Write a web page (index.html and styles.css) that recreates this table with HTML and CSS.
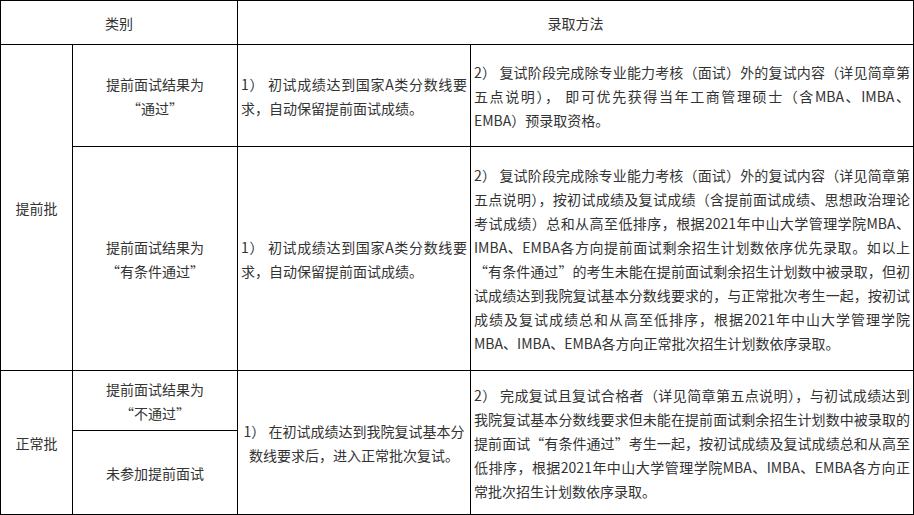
FILE: index.html
```html
<!DOCTYPE html>
<html lang="zh-CN">
<head>
<meta charset="utf-8">
<title>录取方法</title>
<link rel="stylesheet" href="styles.css">
</head>
<body>
<table class="admit">
  <colgroup>
    <col class="c1">
    <col class="c2">
    <col class="c3">
    <col class="c4">
  </colgroup>
  <tr class="r-head">
    <td colspan="2" class="center">类别</td>
    <td colspan="2" class="center">录取方法</td>
  </tr>
  <tr class="r-1">
    <td rowspan="2" class="center">提前批</td>
    <td class="center">提前面试结果为<br>“通过”</td>
    <td class="text">
      <span class="ln">1） 初试成绩达到国家A类分数线要</span>
      <span class="ln end">求，自动保留提前面试成绩。</span>
    </td>
    <td class="text">
      <span class="ln">2） 复试阶段完成除专业能力考核（面试）外的复试内容（详见简章第</span>
      <span class="ln">五点说明）， 即可优先获得当年工商管理硕士（含MBA、IMBA、</span>
      <span class="ln end">EMBA）预录取资格。</span>
    </td>
  </tr>
  <tr class="r-2">
    <td class="center">提前面试结果为<br>“有条件通过”</td>
    <td class="text">
      <span class="ln">1） 初试成绩达到国家A类分数线要</span>
      <span class="ln end">求，自动保留提前面试成绩。</span>
    </td>
    <td class="text">
      <span class="ln">2） 复试阶段完成除专业能力考核（面试）外的复试内容（详见简章第</span>
      <span class="ln">五点说明），按初试成绩及复试成绩（含提前面试成绩、思想政治理论</span>
      <span class="ln">考试成绩）总和从高至低排序，根据2021年中山大学管理学院MBA、</span>
      <span class="ln">IMBA、EMBA各方向提前面试剩余招生计划数依序优先录取。如以上</span>
      <span class="ln">“有条件通过”的考生未能在提前面试剩余招生计划数中被录取，但初</span>
      <span class="ln">试成绩达到我院复试基本分数线要求的，与正常批次考生一起，按初试</span>
      <span class="ln">成绩及复试成绩总和从高至低排序，根据2021年中山大学管理学院</span>
      <span class="ln end">MBA、IMBA、EMBA各方向正常批次招生计划数依序录取。</span>
    </td>
  </tr>
  <tr class="r-3a">
    <td rowspan="2" class="center">正常批</td>
    <td class="center">提前面试结果为<br>“不通过”</td>
    <td rowspan="2" class="center">1） 在初试成绩达到我院复试基本分<br>数线要求后，进入正常批次复试。</td>
    <td rowspan="2" class="text">
      <span class="ln">2） 完成复试且复试合格者（详见简章第五点说明），与初试成绩达到</span>
      <span class="ln">我院复试基本分数线要求但未能在提前面试剩余招生计划数中被录取的</span>
      <span class="ln">提前面试“有条件通过”考生一起，按初试成绩及复试成绩总和从高至</span>
      <span class="ln">低排序，根据2021年中山大学管理学院MBA、IMBA、EMBA各方向正</span>
      <span class="ln end">常批次招生计划数依序录取。</span>
    </td>
  </tr>
  <tr class="r-3b">
    <td class="center">未参加提前面试</td>
  </tr>
</table>
</body>
</html>
```

FILE: styles.css
```css
html, body {
  margin: 0;
  padding: 0;
  background: #fff;
}

body {
  font-family: "Noto Sans CJK SC", sans-serif;
  font-size: 14px;
  line-height: 24px;
  color: #333;
}

.admit {
  border-collapse: collapse;
  table-layout: fixed;
  width: 914px;
}

.c1 { width: 72px; }
.c2 { width: 165px; }
.c3 { width: 233px; }
.c4 { width: 443px; }

.admit td {
  border: 1px solid #000;
  padding: 0 3px;
  vertical-align: middle;
  overflow: hidden;
}

.r-head { height: 44px; }
.r-1 { height: 102px; }
.r-2 { height: 224px; }
.r-3a { height: 60px; }
.r-3b { height: 84px; }

.center {
  text-align: center;
}

.text {
  text-align: left;
}

.ln {
  display: block;
  white-space: nowrap;
  text-align: justify;
  text-align-last: justify;
}

.ln.end {
  text-align-last: left;
}
```
